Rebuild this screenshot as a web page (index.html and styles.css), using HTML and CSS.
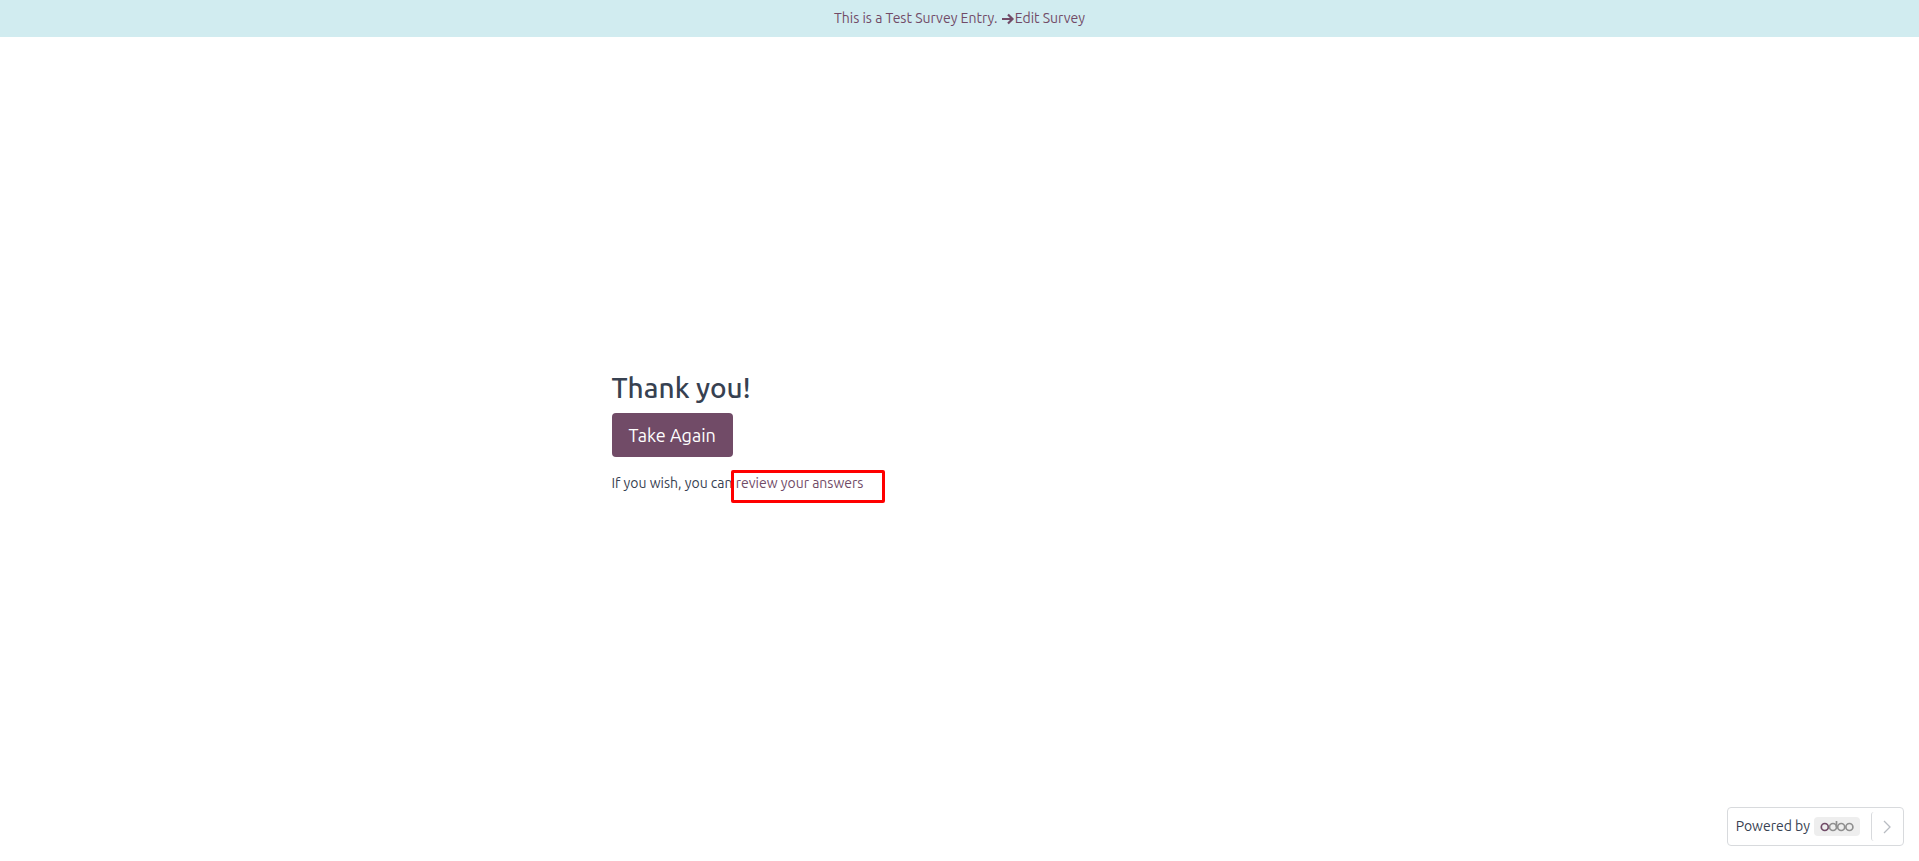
FILE: index.html
```html
<!DOCTYPE html>
<html lang="en">
<head>
<meta charset="utf-8">
<meta name="viewport" content="width=device-width, initial-scale=1">
<title>Survey</title>
<link rel="stylesheet" href="styles.css">
</head>
<body>
<header class="test-banner">
  <a href="#edit">This is a Test Survey Entry. <svg class="arrow" viewBox="0 0 13 12" aria-hidden="true"><path d="M0.5 6H11M6.5 1.5L11 6L6.5 10.5"/></svg>Edit Survey</a>
</header>
<main class="survey">
  <section class="finished">
    <h1>Thank you!</h1>
    <a class="btn" href="#again">Take Again</a>
    <p>If you wish, you can <span class="marked"><a href="#review">review your answers</a></span></p>
  </section>
</main>
<footer class="powered">
  <span>Powered by</span>
  <a class="brand" href="#odoo" aria-label="odoo">
    <svg viewBox="0 0 34 12" aria-hidden="true">
      <circle class="first" cx="4.8" cy="7" r="3.5"/>
      <circle cx="13" cy="7" r="3.5"/>
      <path d="M16.5 1V7"/>
      <circle cx="21.2" cy="7" r="3.5"/>
      <circle cx="29.4" cy="7" r="3.5"/>
    </svg>
  </a>
  <button class="next" type="button" aria-label="Next">
    <svg viewBox="0 0 8 14" aria-hidden="true"><path d="M1 1L7 7L1 13"/></svg>
  </button>
</footer>
</body>
</html>
```
FILE: styles.css
```css
* { box-sizing: border-box; }
body {
  margin: 0;
  min-height: 100vh;
  display: flex;
  flex-direction: column;
  background: #fff;
  color: #374151;
  font: 14px/21px Ubuntu, "Noto Sans", sans-serif;
}
a { color: #714b67; text-decoration: none; }
.test-banner {
  padding: 8px 16px;
  background: #d1ecf0;
  text-align: center;
}
.arrow { width: 14px; height: 12px; vertical-align: -2px; }
.arrow path { fill: none; stroke: #714b67; stroke-width: 2.2; }
.survey {
  flex: 1;
  display: flex;
  flex-direction: column;
  justify-content: center;
}
.finished {
  width: 100%;
  max-width: 720px;
  margin: 0 auto;
  padding: 0 12px 18px;
}
h1 {
  margin: 0 0 8px;
  font-size: 28px;
  line-height: 34px;
  font-weight: 500;
}
.btn {
  display: inline-block;
  padding: 10px 17px;
  border-radius: 4px;
  background: #714b67;
  color: #fff;
  font-size: 18px;
  line-height: 24px;
}
p { margin: 16px 0; }
.marked { position: relative; }
.marked::after {
  content: "";
  position: absolute;
  inset: -5px -22px -12px -5px;
  border: 3px solid #f00;
  border-radius: 2px;
  pointer-events: none;
}
.powered {
  position: fixed;
  right: 15px;
  bottom: 15px;
  display: flex;
  align-items: center;
  gap: 4px;
  padding: 4px 0 4px 8px;
  border: 1px solid #d8dadd;
  border-radius: 4px;
  background: #fff;
}
.brand {
  display: flex;
  padding: 3px 6px 4px;
  border-radius: 4px;
  background: #eee;
}
.brand svg { width: 34px; height: 12px; fill: none; stroke: #8f8f8f; stroke-width: 1.7; }
.brand .first { stroke: #714b67; }
.next {
  display: flex;
  align-items: center;
  justify-content: center;
  width: 32px;
  height: 29px;
  margin-left: 7px;
  padding: 0 2px 0 0;
  border: 0;
  border-left: 1px solid #d8dadd;
  border-radius: 3px;
  background: none;
}
.next svg { width: 8px; height: 14px; fill: none; stroke: #b8bcc2; stroke-width: 1.3; }
```
